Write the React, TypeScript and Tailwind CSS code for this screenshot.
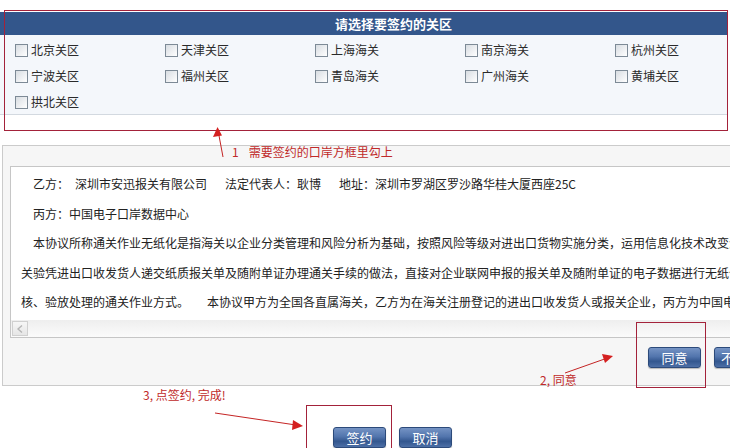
import React from 'react';

const customsAreas = [
  '北京关区', '天津关区', '上海海关', '南京海关', '杭州关区',
  '宁波关区', '福州关区', '青岛海关', '广州海关', '黄埔关区',
  '拱北关区',
];

const BlueButton: React.FC<{ label: string }> = ({ label }) => (
  <button className="shrink-0 w-[53px] h-[21px] rounded-[3px] border border-[#2c4a7a] bg-[linear-gradient(#7593c4,#5275ad_45%,#33578f_70%,#4d6fa6)] text-white text-[13px] leading-[19px] whitespace-nowrap overflow-hidden shadow-[0_1px_1px_rgba(0,0,0,0.25)]">
    {label}
  </button>
);

const CheckItem: React.FC<{ label: string }> = ({ label }) => (
  <label className="flex items-center gap-[3px] text-[12px] text-[#2a2a2a]">
    <span className="w-[13px] h-[13px] border border-[#7d8a96] bg-[linear-gradient(135deg,#d8dde2,#ffffff)]" />
    {label}
  </label>
);

const App: React.FC = () => {
  return (
    <div className="relative w-[730px] h-[448px] overflow-hidden bg-white font-['Noto_Sans_CJK_SC','Noto_Sans',sans-serif] text-[12px]">
      {/* 关区选择 */}
      <div className="w-[727px] pt-[12px]">
        <div className="h-[23px] bg-[#33568b] pl-[335px] text-[13px] font-bold leading-[23px] text-white">
          请选择要签约的关区
        </div>
        <div className="h-[80px] border-b border-[#d3d9e0] bg-[#f4f7fb] pl-[15px] pt-[2px]">
          <div className="grid grid-cols-[150px_150px_150px_150px_150px] auto-rows-[26px]">
            {customsAreas.map(name => (
              <CheckItem key={name} label={name} />
            ))}
          </div>
        </div>
      </div>

      {/* 协议内容 */}
      <div className="mt-[30px] ml-[2px] h-[241px] overflow-hidden border-t border-l border-b border-[#cbcbcb] bg-[#f6f6f6] pl-[7px] pt-[20px]">
        <div className="w-[800px] h-[172px] border border-[#c6c6c6] bg-white flex flex-col">
          <div className="flex-1 overflow-hidden whitespace-nowrap pt-[2px] text-[12px] leading-[29.5px] text-[#222]">
            <div className="pl-[22px]">
              <span>乙方：</span>
              <span className="ml-[6px]">深圳市安迅报关有限公司</span>
              <span className="ml-[18px]">法定代表人：耿博</span>
              <span className="ml-[18px]">地址：深圳市罗湖区罗沙路华桂大厦西座25C</span>
            </div>
            <div className="pl-[22px]">丙方：中国电子口岸数据中心</div>
            <div className="pl-[22px]">
              本协议所称通关作业无纸化是指海关以企业分类管理和风险分析为基础，按照风险等级对进出口货物实施分类，运用信息化技术改变海
            </div>
            <div className="pl-[10px]">
              关验凭进出口收发货人递交纸质报关单及随附单证办理通关手续的做法，直接对企业联网申报的报关单及随附单证的电子数据进行无纸化审
            </div>
            <div className="pl-[10px]">
              <span>核、验放处理的通关作业方式。</span>
              <span className="ml-[18px]">本协议甲方为全国各直属海关，乙方为在海关注册登记的进出口收发货人或报关企业，丙方为中国电子口岸数据中心。</span>
            </div>
          </div>
          {/* 横向滚动条 */}
          <div className="h-[17px] flex bg-[linear-gradient(#eeeeee,#fbfbfb)]">
            <div className="w-[16px] h-[15px] mt-[1px] ml-[1px] flex items-center justify-center border border-[#d0d0d0] bg-[linear-gradient(#f6f6f6,#e6e6e6)]">
              <svg width="6" height="8" viewBox="0 0 6 8">
                <path d="M5 0.5 L1 4 L5 7.5" stroke="#b5b5b5" strokeWidth="1.4" fill="none" />
              </svg>
            </div>
          </div>
        </div>
        <div className="flex gap-[13px] pl-[638px] mt-[9px]">
          <BlueButton label="同意" />
          <BlueButton label="不同意" />
        </div>
      </div>

      {/* 签约按钮 */}
      <div className="flex gap-[13px] pl-[333px] pt-[41px]">
        <BlueButton label="签约" />
        <BlueButton label="取消" />
      </div>

      {/* 标注 */}
      <div className="absolute left-[4px] top-[10px] w-[724px] h-[121px] border border-[#a3223a]" />
      <div className="absolute left-[636px] top-[322px] w-[70px] h-[66px] border border-[#a3223a]" />
      <div className="absolute left-[306px] top-[405px] w-[86px] h-[60px] border border-[#a3223a]" />

      <div className="absolute left-[232px] top-[143px] text-[12px] leading-[18px] text-[#c02a2a] whitespace-nowrap">
        1<span className="ml-[10px]">需要签约的口岸方框里勾上</span>
      </div>
      <div className="absolute left-[540px] top-[371px] text-[12px] leading-[18px] text-[#c02a2a] whitespace-nowrap">
        2, 同意
      </div>
      <div className="absolute left-[143px] top-[386px] text-[12px] leading-[18px] text-[#c02a2a] whitespace-nowrap">
        3, 点签约, 完成!
      </div>

      <svg className="absolute left-0 top-0 pointer-events-none" width="730" height="448">
        <g stroke="#c42424" strokeWidth="1" fill="#d42020">
          <line x1="223" y1="157" x2="218.5" y2="133" />
          <polygon points="217.5,127 213,137 222,135.5" stroke="none" />
          <line x1="565" y1="373" x2="606" y2="358.5" />
          <polygon points="613,356 602,354 605,363" stroke="none" />
          <line x1="215" y1="413" x2="296" y2="425" />
          <polygon points="303,426 293,420 292,430" stroke="none" />
        </g>
      </svg>
    </div>
  );
};

export default App;
